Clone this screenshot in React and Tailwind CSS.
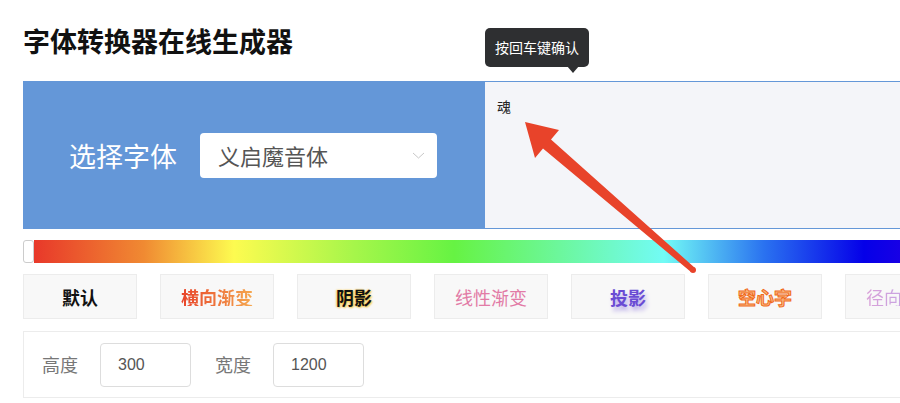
import React from "react";

const effects = [
  { label: "默认", cls: "font-bold text-[#111]" },
  { label: "横向渐变", cls: "font-bold bg-[linear-gradient(to_right,#e8442a,#f5a84f)] bg-clip-text text-transparent" },
  { label: "阴影", cls: "font-bold text-[#111] [text-shadow:1px_1px_2px_#f5c542,-1px_0_2px_#f5c542]" },
  { label: "线性渐变", cls: "text-[#e27ba6]" },
  { label: "投影", cls: "font-bold text-[#6a4bd4] [text-shadow:2px_4px_4px_#b9aae8]" },
  { label: "空心字", cls: "font-bold text-[#f8bb85] [-webkit-text-stroke:1px_#f06a1a]" },
  { label: "径向渐变", cls: "bg-[linear-gradient(to_right,#d9a0d8,#b9a8ec)] bg-clip-text text-transparent" },
];

export default function App() {
  return (
    <div className="relative w-[900px] h-[403px] overflow-hidden bg-white font-['Noto_Sans_CJK_SC','Noto_Sans',sans-serif]">
      <div className="w-[1100px] pl-[23px]">
        {/* title */}
        <div className="h-[81px] flex items-center">
          <h1 className="text-[27px] leading-[30px] font-bold text-[#111]">字体转换器在线生成器</h1>
        </div>

        {/* font picker + input */}
        <div className="flex h-[148px]">
          <div className="w-[462px] bg-[#6497d8] flex items-center pl-[46px] gap-[23px]">
            <span className="text-[27px] text-white leading-none">选择字体</span>
            <div className="w-[237px] h-[45px] bg-white rounded-[4px] flex items-center justify-between pl-[18px] pr-[12px]">
              <span className="text-[22px] text-[#555] leading-none">义启魔音体</span>
              <svg width="13" height="7" viewBox="0 0 13 7" fill="none">
                <path d="M1 1l5.5 5L12 1" stroke="#c8c8c8" strokeWidth="1" />
              </svg>
            </div>
          </div>
          <div className="flex-1 bg-[#f4f5f9] border-y border-[#6497d8] pt-[11px] pl-[12px]">
            <span className="text-[14px] text-[#222]">魂</span>
          </div>
        </div>

        {/* colour slider */}
        <div className="mt-[11px] h-[23px] flex">
          <div className="w-[11px] h-full bg-white border border-[#ccc] rounded-[3px]"></div>
          <div className="flex-1 h-full bg-[linear-gradient(to_right,#e8382a_0px,#f08a32_110px,#fdfb50_200px,#a6f64a_320px,#66f343_420px,#72fbf5_630px,#2a72f0_730px,#0500e8_830px,#5200dc_980px)]"></div>
        </div>

        {/* effect buttons */}
        <div className="mt-[11px] flex gap-[23px]">
          {effects.map((e) => (
            <div
              key={e.label}
              className="w-[114px] h-[45px] shrink-0 bg-[#f8f8f8] border border-[#ececec] flex items-center justify-center"
            >
              <span className={`text-[18px] leading-none ${e.cls}`}>{e.label}</span>
            </div>
          ))}
        </div>

        {/* size */}
        <div className="mt-[12px] h-[67px] border border-[#ececec] flex items-center pl-[18px]">
          <span className="text-[18px] text-[#777]">高度</span>
          <div className="ml-[22px] w-[91px] h-[44px] border border-[#ddd] rounded-[4px] flex items-center pl-[17px]">
            <span className="text-[16px] text-[#555] font-['Liberation_Sans',sans-serif]">300</span>
          </div>
          <span className="ml-[24px] text-[18px] text-[#777]">宽度</span>
          <div className="ml-[22px] w-[91px] h-[44px] border border-[#ddd] rounded-[4px] flex items-center pl-[17px]">
            <span className="text-[16px] text-[#555] font-['Liberation_Sans',sans-serif]">1200</span>
          </div>
        </div>
      </div>

      {/* tooltip */}
      <div className="absolute left-[485px] top-[28px] w-[104px] h-[39px] rounded-[5px] bg-[#2e2f31] flex items-center justify-center">
        <span className="text-[14px] text-white">按回车键确认</span>
      </div>
      <div className="absolute left-[567px] top-[66px] w-0 h-0 border-x-[6px] border-t-[7px] border-x-transparent border-t-[#2e2f31]"></div>

      {/* annotation arrow */}
      <svg className="absolute left-0 top-0 pointer-events-none" width="900" height="403">
        <polygon
          points="525,122 559,130 551,139.5 695,268 691,272 543,148.5 535,158"
          fill="#e8432a"
        />
        <circle cx="693" cy="270" r="3" fill="#e8432a" />
      </svg>
    </div>
  );
}
